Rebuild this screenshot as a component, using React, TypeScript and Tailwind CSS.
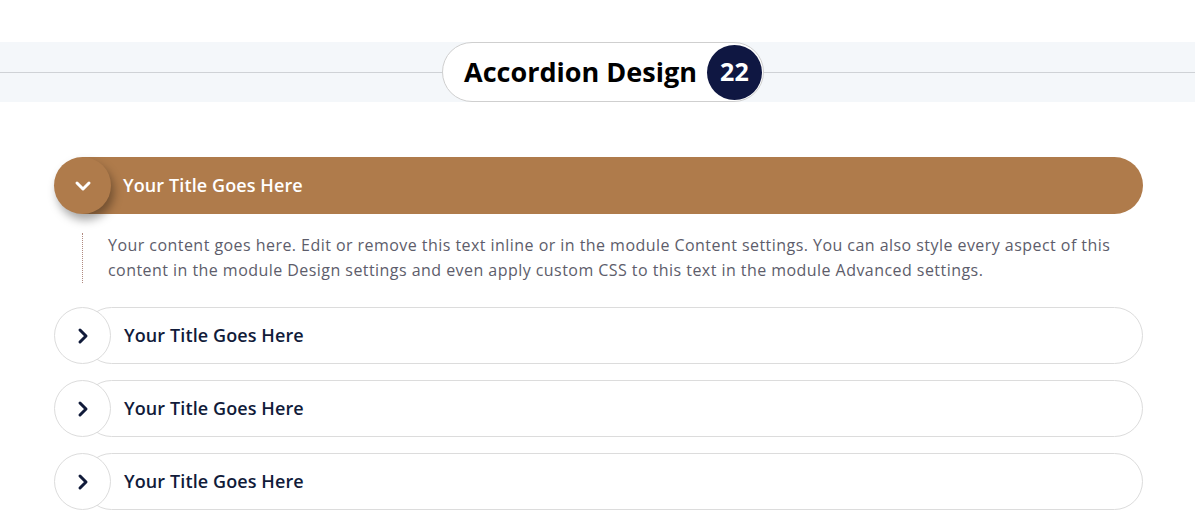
import { ChevronDown, ChevronRight } from 'lucide-react';

const items = [
  { title: 'Your Title Goes Here', open: true },
  { title: 'Your Title Goes Here', open: false },
  { title: 'Your Title Goes Here', open: false },
  { title: 'Your Title Goes Here', open: false },
];

export default function App() {
  return (
    <div className="min-h-[529px] bg-white pt-[42px] font-['Open_Sans',sans-serif]">
      {/* Heading band */}
      <div className="relative flex h-[60px] items-center justify-center bg-[#f4f7fa]">
        <div className="absolute inset-x-0 top-[30px] h-px bg-[#cfd2d6]" />
        <div className="relative ml-[11px] flex h-[60px] items-center gap-[10px] rounded-full border border-[#cfcfcf] bg-white pl-[21px] pr-[1px]">
          <span className="text-[27px] font-bold text-black">Accordion Design</span>
          <span className="flex h-[55px] w-[55px] items-center justify-center rounded-full bg-[#0f1742] text-[25px] font-bold text-white">
            22
          </span>
        </div>
      </div>

      {/* Accordion */}
      <div className="ml-[54px] mr-[52px] mt-[55px] flex flex-col gap-4">
        {items.map((item, i) => (
          <div key={i}>
            <div className="flex h-[57px] items-center">
              <div
                className={
                  item.open
                    ? 'z-10 flex h-[57px] w-[57px] shrink-0 items-center justify-center rounded-full bg-[#af7b4b] shadow-[3px_6px_10px_rgba(0,0,0,0.35)]'
                    : 'z-10 flex h-[57px] w-[57px] shrink-0 items-center justify-center rounded-full border border-[#dcdcdc] bg-white'
                }
              >
                {item.open ? (
                  <ChevronDown className="h-6 w-6 text-white" strokeWidth={3} />
                ) : (
                  <ChevronRight className="h-6 w-6 text-[#111b3a]" strokeWidth={3} />
                )}
              </div>
              <div
                className={
                  item.open
                    ? '-ml-[28px] flex h-[57px] flex-1 items-center rounded-r-full bg-[#af7b4b] pl-[40px] text-[18px] font-semibold tracking-[0.1px] text-white'
                    : '-ml-[28px] flex h-[57px] flex-1 items-center rounded-full border border-[#dcdcdc] bg-white pl-[40px] text-[18px] font-semibold tracking-[0.1px] text-[#111b3a]'
                }
              >
                {item.title}
              </div>
            </div>
            {item.open && (
              <div className="mb-[8px] ml-[28px] mt-[19px] border-l border-dotted border-[#b08a80] pl-[25px] pr-[20px] text-[16px] leading-[25px] tracking-[0.45px] text-[#5d5d6b]">
                Your content goes here. Edit or remove this text inline or in the module Content settings. You can also style every aspect of this content in the module Design settings and even apply custom CSS to this text in the module Advanced settings.
              </div>
            )}
          </div>
        ))}
      </div>
    </div>
  );
}
